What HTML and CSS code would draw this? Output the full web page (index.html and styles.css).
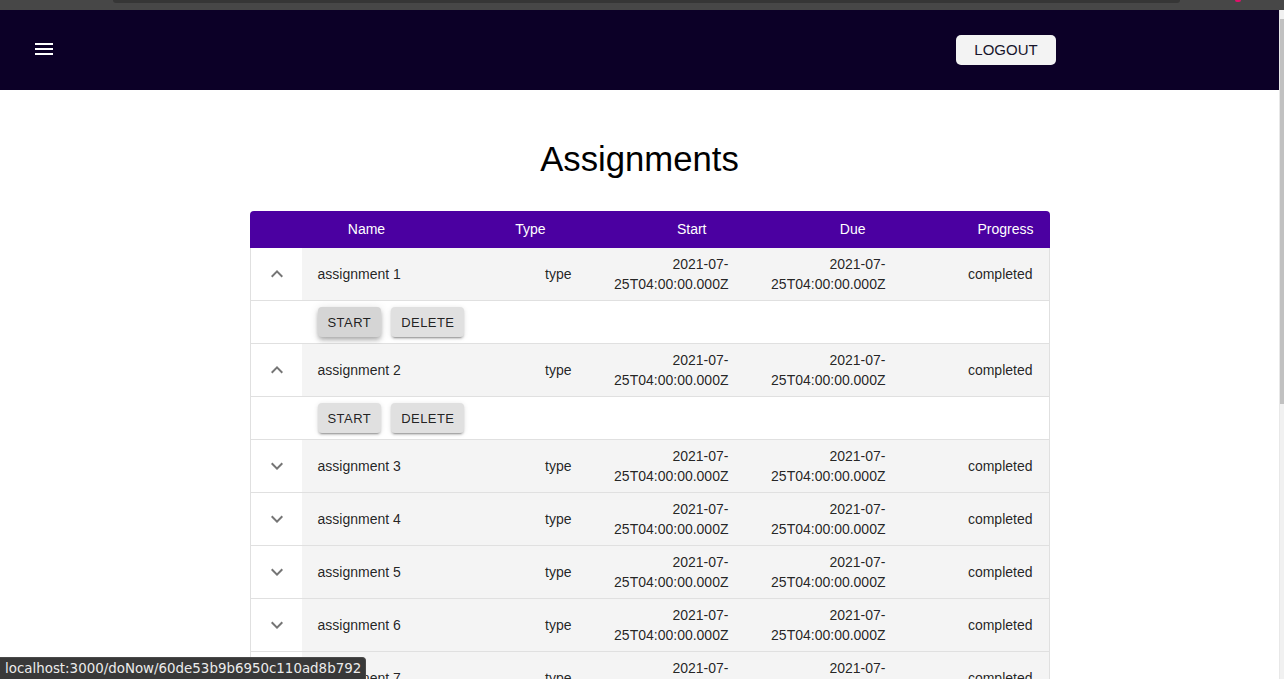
FILE: index.html
```html
<!DOCTYPE html>
<html lang="en">
<head>
<meta charset="utf-8">
<title>Assignments</title>
<link rel="stylesheet" href="styles.css">
</head>
<body>
<div class="chrome"><div class="chrome-pill"></div><div class="chrome-dot"></div></div>
<div class="viewport">
  <div class="page">
    <header class="navbar">
      <button class="menu-btn" aria-label="menu">
        <svg viewBox="0 0 24 24" width="24" height="24"><path fill="#fff" d="M3 18h18v-2H3v2zm0-5h18v-2H3v2zm0-7v2h18V6H3z"/></svg>
      </button>
      <div class="spacer"></div>
      <button class="logout">LOGOUT</button>
    </header>
    <main class="main">
      <h1 class="title">Assignments</h1>
      <div class="table">
        <div class="thead">
          <div></div>
          <div class="th center">Name</div>
          <div class="th right">Type</div>
          <div class="th right">Start</div>
          <div class="th right">Due</div>
          <div class="th right">Progress</div>
        </div>
        <div class="tbody">
          <div class="row">
            <div class="icon-cell"><svg viewBox="0 0 24 24" width="24" height="24"><path fill="#757575" d="M7.41 15.41L12 10.83l4.59 4.58L18 14l-6-6-6 6z"/></svg></div>
            <div class="td">assignment 1</div>
            <div class="td right">type</div>
            <div class="td right">2021-07-<wbr>25T04:00:00.000Z</div>
            <div class="td right">2021-07-<wbr>25T04:00:00.000Z</div>
            <div class="td right">completed</div>
          </div>
          <div class="detail">
            <div></div>
            <div class="actions"><button class="btn hover">START</button><button class="btn">DELETE</button></div>
          </div>
          <div class="row">
            <div class="icon-cell"><svg viewBox="0 0 24 24" width="24" height="24"><path fill="#757575" d="M7.41 15.41L12 10.83l4.59 4.58L18 14l-6-6-6 6z"/></svg></div>
            <div class="td">assignment 2</div>
            <div class="td right">type</div>
            <div class="td right">2021-07-<wbr>25T04:00:00.000Z</div>
            <div class="td right">2021-07-<wbr>25T04:00:00.000Z</div>
            <div class="td right">completed</div>
          </div>
          <div class="detail">
            <div></div>
            <div class="actions"><button class="btn">START</button><button class="btn">DELETE</button></div>
          </div>
          <div class="row">
            <div class="icon-cell"><svg viewBox="0 0 24 24" width="24" height="24"><path fill="#757575" d="M7.41 8.59L12 13.17l4.59-4.58L18 10l-6 6-6-6 1.41-1.41z"/></svg></div>
            <div class="td">assignment 3</div>
            <div class="td right">type</div>
            <div class="td right">2021-07-<wbr>25T04:00:00.000Z</div>
            <div class="td right">2021-07-<wbr>25T04:00:00.000Z</div>
            <div class="td right">completed</div>
          </div>
          <div class="row">
            <div class="icon-cell"><svg viewBox="0 0 24 24" width="24" height="24"><path fill="#757575" d="M7.41 8.59L12 13.17l4.59-4.58L18 10l-6 6-6-6 1.41-1.41z"/></svg></div>
            <div class="td">assignment 4</div>
            <div class="td right">type</div>
            <div class="td right">2021-07-<wbr>25T04:00:00.000Z</div>
            <div class="td right">2021-07-<wbr>25T04:00:00.000Z</div>
            <div class="td right">completed</div>
          </div>
          <div class="row">
            <div class="icon-cell"><svg viewBox="0 0 24 24" width="24" height="24"><path fill="#757575" d="M7.41 8.59L12 13.17l4.59-4.58L18 10l-6 6-6-6 1.41-1.41z"/></svg></div>
            <div class="td">assignment 5</div>
            <div class="td right">type</div>
            <div class="td right">2021-07-<wbr>25T04:00:00.000Z</div>
            <div class="td right">2021-07-<wbr>25T04:00:00.000Z</div>
            <div class="td right">completed</div>
          </div>
          <div class="row">
            <div class="icon-cell"><svg viewBox="0 0 24 24" width="24" height="24"><path fill="#757575" d="M7.41 8.59L12 13.17l4.59-4.58L18 10l-6 6-6-6 1.41-1.41z"/></svg></div>
            <div class="td">assignment 6</div>
            <div class="td right">type</div>
            <div class="td right">2021-07-<wbr>25T04:00:00.000Z</div>
            <div class="td right">2021-07-<wbr>25T04:00:00.000Z</div>
            <div class="td right">completed</div>
          </div>
          <div class="row">
            <div class="icon-cell"><svg viewBox="0 0 24 24" width="24" height="24"><path fill="#757575" d="M7.41 8.59L12 13.17l4.59-4.58L18 10l-6 6-6-6 1.41-1.41z"/></svg></div>
            <div class="td">assignment 7</div>
            <div class="td right">type</div>
            <div class="td right">2021-07-<wbr>25T04:00:00.000Z</div>
            <div class="td right">2021-07-<wbr>25T04:00:00.000Z</div>
            <div class="td right">completed</div>
          </div>
        </div>
      </div>
    </main>
  </div>
  <div class="scrollbar"><div class="scroll-up"></div><div class="scroll-thumb"></div></div>
</div>
<div class="status">localhost:3000/doNow/60de53b9b6950c110ad8b792</div>
</body>
</html>
```
FILE: styles.css
```css
* { box-sizing: border-box; }
html, body { margin: 0; padding: 0; }
body {
  width: 1284px;
  height: 679px;
  overflow: hidden;
  font-family: "Liberation Sans", Arial, sans-serif;
  background: #fff;
  display: flex;
  flex-direction: column;
}
.chrome {
  height: 10px;
  background: #474747;
  display: flex;
  align-items: flex-start;
  flex-shrink: 0;
}
.chrome-pill {
  margin-left: 113px;
  width: 1067px;
  height: 3px;
  background: #363636;
  border-radius: 0 0 5px 5px;
}
.chrome-dot {
  margin-left: 55px;
  width: 6px;
  height: 2px;
  background: #e0106a;
  border-radius: 0 0 3px 3px;
}
.viewport {
  flex: 1;
  display: flex;
  min-height: 0;
}
.page {
  flex: 1;
  overflow: hidden;
}
.navbar {
  height: 80px;
  background: #0c0027;
  display: flex;
  align-items: center;
  padding-left: 32px;
}
.menu-btn {
  border: 0;
  background: none;
  padding: 0;
  width: 24px;
  height: 24px;
  margin-top: -2px;
  display: flex;
}
.spacer { flex: 1; }
.logout {
  width: 100px;
  height: 30px;
  margin-right: 223px;
  margin-top: -1px;
  border: 0;
  border-radius: 5px;
  background: #f3f3f3;
  color: #17152b;
  font-family: "Liberation Sans", Arial, sans-serif;
  font-size: 15px;
  padding: 0;
}
.main {
  display: flex;
  flex-direction: column;
  align-items: center;
}
.title {
  margin: 49px 0 32px;
  font-size: 34.7px;
  line-height: 40px;
  font-weight: 400;
  color: #000;
}
.table {
  width: 800px;
  margin-left: 20px;
  font-size: 14px;
}
.thead {
  display: grid;
  grid-template-columns: 52px 130px 130px 161px 159px 168px;
  height: 37px;
  padding-bottom: 2px;
  background: #4b00a1;
  border-radius: 4px 4px 0 0;
  color: #fff;
  align-items: center;
}
.th { padding: 0 16px; }
.center { text-align: center; }
.right { text-align: right; }
.tbody {
  border-left: 1px solid #e0e0e0;
  border-right: 1px solid #e0e0e0;
}
.row {
  display: grid;
  grid-template-columns: 51px 227px 59px 157px 157px 147px;
  height: 53px;
  border-bottom: 1px solid #e0e0e0;
  color: rgba(0,0,0,0.87);
}
.row > .td {
  background: #f4f4f4;
  padding: 0 16px;
  display: flex;
  align-items: center;
  line-height: 20px;
}
.row > .td.right { justify-content: flex-end; }
.icon-cell {
  background: #fff;
  display: flex;
  align-items: center;
  justify-content: center;
  padding-left: 1px;
}
.detail {
  display: grid;
  grid-template-columns: 51px 1fr;
  height: 43px;
  border-bottom: 1px solid #e0e0e0;
}
.actions {
  display: flex;
  gap: 10px;
  align-items: flex-start;
  padding: 6px 16px 0;
}
.btn {
  height: 30px;
  padding: 0 10px;
  border: 0;
  border-radius: 4px;
  background: #e0e0e0;
  color: rgba(0,0,0,0.87);
  font-family: "Liberation Sans", Arial, sans-serif;
  font-size: 13px;
  letter-spacing: 0.45px;
  box-shadow: 0 3px 1px -2px rgba(0,0,0,0.2), 0 2px 2px 0 rgba(0,0,0,0.14), 0 1px 5px 0 rgba(0,0,0,0.12);
}
.btn.hover {
  background: #d5d5d5;
  box-shadow: 0 2px 4px -1px rgba(0,0,0,0.2), 0 4px 5px 0 rgba(0,0,0,0.14), 0 1px 10px 0 rgba(0,0,0,0.12);
}
.scrollbar {
  width: 5px;
  background: #f1f1f1;
  border-left: 1px solid #e8e8e8;
  display: flex;
  flex-direction: column;
  align-items: flex-end;
}
.scroll-up {
  height: 9px;
}
.scroll-thumb {
  width: 4px;
  height: 385px;
  background: #c1c1c1;
}
.status {
  position: fixed;
  left: 0;
  bottom: 0;
  height: 22px;
  padding: 0 4px 0 5px;
  background: #393939;
  color: #ececec;
  font-family: "DejaVu Sans", "Noto Sans", sans-serif;
  font-size: 13.4px;
  line-height: 22px;
  border-radius: 0 4px 0 0;
  border-top: 1px solid #4a4a4a;
  border-right: 1px solid #4a4a4a;
  white-space: nowrap;
}
```
